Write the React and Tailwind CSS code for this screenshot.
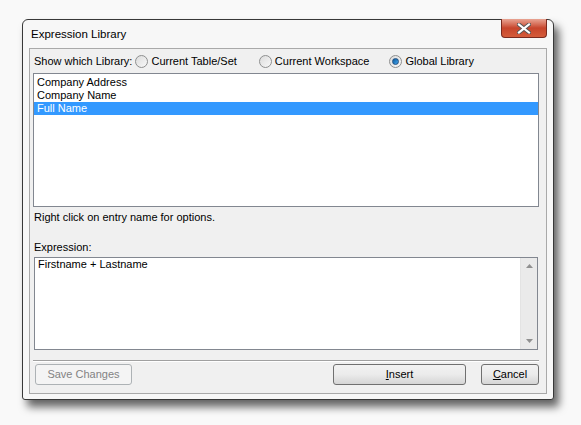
import React from 'react';

const font = { fontFamily: '"Liberation Sans", Arial, sans-serif' };

const Radio = ({ checked, label }) => (
  <label className="flex items-center gap-[3px]">
    <span className="w-[13px] h-[13px] rounded-full border border-[#8e8f8f] bg-gradient-to-br from-[#dcdcdc] to-[#f8f8f8] flex items-center justify-center">
      {checked && (
        <span className="w-[7px] h-[7px] rounded-full bg-gradient-to-br from-[#0a5a9c] to-[#43a6f0] border border-[#1f4f80]" />
      )}
    </span>
    <span>{label}</span>
  </label>
);

const Button = ({ children, className = '', disabled }) => (
  <button
    className={`h-[21px] rounded-[3px] border ${
      disabled
        ? 'border-[#adb2b5] bg-[#f4f4f4] text-[#838383]'
        : 'border-[#707070] bg-gradient-to-b from-[#f2f2f2] via-[#ebebeb] to-[#d5d5d5] text-black'
    } text-[11px] leading-none ${className}`}
  >
    {children}
  </button>
);

export default function App() {
  const items = ['Company Address', 'Company Name', 'Full Name'];
  return (
    <div className="w-[581px] h-[425px] bg-[#f9f9f9] pt-[19px] pl-[22px] text-[11px] text-black" style={font}>
      <div className="w-[532px] h-[381px] rounded-t-[6px] rounded-b-[3px] border border-[#383838] bg-[#f7f7f7] shadow-[5px_7px_8px_rgba(0,0,0,0.6)] flex flex-col">
        <div className="h-[28px] flex items-start justify-between pl-[8px] pr-[6px]">
          <span className="text-[11.5px] mt-[6px] text-black">Expression Library</span>
          <div className="w-[46px] h-[19px] mt-[-1px] rounded-b-[4px] border border-[#7a2a1e] border-t-0 bg-gradient-to-b from-[#e8a493] via-[#c7452c] to-[#d45c3a] flex items-center justify-center">
            <svg width="14" height="11" viewBox="0 0 14 11">
              <path d="M2 1.5 L12 9.5 M12 1.5 L2 9.5" stroke="#555" strokeWidth="4" strokeLinecap="square" />
              <path d="M2 1.5 L12 9.5 M12 1.5 L2 9.5" stroke="#fff" strokeWidth="2.2" strokeLinecap="square" />
            </svg>
          </div>
        </div>
        <div className="flex-1 mx-[6px] mb-[5px] border border-[#a9a9a9] bg-[#f0f0f0] flex flex-col pl-[3px] pr-[7px]">
          <div className="h-[23px] mt-[1px] flex items-center pl-[1px]">
            <span>Show which Library:</span>
            <div className="ml-[3px]"><Radio label="Current Table/Set" /></div>
            <div className="ml-[22px]"><Radio label="Current Workspace" /></div>
            <div className="ml-[20px]"><Radio checked label="Global Library" /></div>
          </div>
          <div className="h-[134px] border border-[#828790] bg-white pt-[2px]">
            {items.map((it, i) => (
              <div
                key={it}
                className={`h-[13px] leading-[13px] pl-[3px] ${i === 2 ? 'bg-[#3399ff] text-white' : ''}`}
              >
                {it}
              </div>
            ))}
          </div>
          <div className="mt-[4px] pl-[1px] h-[13px] leading-[13px]">Right click on entry name for options.</div>
          <div className="mt-[17px] pl-[1px] h-[13px] leading-[13px]">Expression:</div>
          <div className="mt-[3px] ml-[1px] mr-[1px] h-[93px] border border-[#828790] bg-white flex">
            <div className="flex-1 pl-[3px] pt-0 leading-[13px]">Firstname + Lastname</div>
            <div className="w-[17px] bg-[#eaeaea] border-l border-[#e3e3e3] flex flex-col items-center justify-between py-[6px]">
              <svg width="7" height="4" viewBox="0 0 7 4"><path d="M3.5 0 L7 4 L0 4 Z" fill="#909090" /></svg>
              <svg width="7" height="4" viewBox="0 0 7 4"><path d="M0 0 L7 0 L3.5 4 Z" fill="#909090" /></svg>
            </div>
          </div>
          <div className="mt-[10px] h-px bg-[#a0a0a0] border-b border-white box-content" />
          <div className="mt-[2px] flex items-center pl-[2px]">
            <Button disabled className="w-[97px]">Save Changes</Button>
            <Button className="w-[133px] ml-auto"><span className="underline">I</span>nsert</Button>
            <Button className="w-[58px] ml-[15px]"><span className="underline">C</span>ancel</Button>
          </div>
        </div>
      </div>
    </div>
  );
}
